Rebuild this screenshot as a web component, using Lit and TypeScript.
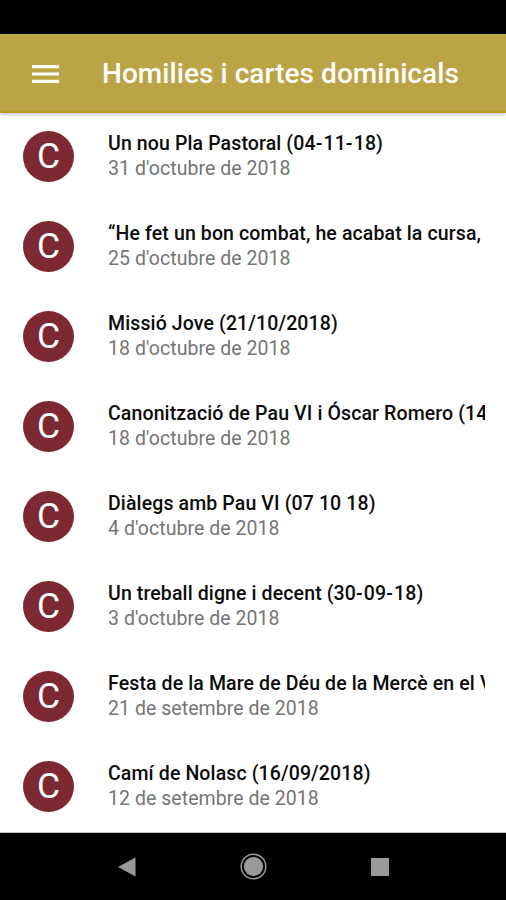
import { LitElement, html, css } from "lit";
import { customElement } from "lit/decorators.js";

const items = [
  ["Un nou Pla Pastoral (04-11-18)", "31 d'octubre de 2018"],
  ["“He fet un bon combat, he acabat la cursa,", "25 d'octubre de 2018"],
  ["Missió Jove (21/10/2018)", "18 d'octubre de 2018"],
  ["Canonització de Pau VI i Óscar Romero (14", "18 d'octubre de 2018"],
  ["Diàlegs amb Pau VI (07 10 18)", "4 d'octubre de 2018"],
  ["Un treball digne i decent (30-09-18)", "3 d'octubre de 2018"],
  ["Festa de la Mare de Déu de la Mercè en el V", "21 de setembre de 2018"],
  ["Camí de Nolasc (16/09/2018)", "12 de setembre de 2018"],
];

@customElement("app-root")
export class AppRoot extends LitElement {
  static styles = css`
    :host { display: flex; flex-direction: column; height: 900px; background: #fff; font-family: Roboto, sans-serif; overflow: hidden; }
    .status { height: 34px; flex: none; background: #000; }
    .bar { height: 79px; flex: none; background: #bba445; display: flex; align-items: center; padding-left: 32px; box-sizing: border-box; border-bottom: 2px solid #b89d2a; box-shadow: 0 1px 4px rgba(60,60,90,.4); color: #fff; }
    .menu { width: 27px; height: 18px; flex: none; margin: 2px 43px 0 0; }
    h1 { margin: 3px 0 0; font-size: 28px; font-weight: 500; line-height: 32px; letter-spacing: .06px; white-space: nowrap; }
    .list { flex: 1; min-height: 0; box-sizing: border-box; border-bottom: 1px solid #c4c4c4; }
    .row { height: 90px; display: flex; padding: 18px 21.5px 0 23px; box-sizing: border-box; }
    .row:last-child { height: 89px; }
    .avatar { width: 51px; height: 51px; flex: none; border-radius: 50%; background: #7d2931; color: #fff; font-size: 35.5px; line-height: 51px; text-align: center; margin-right: 34px; }
    .text { min-width: 0; flex: 1; overflow: hidden; white-space: nowrap; padding-top: 1px; }
    .title { font-size: 19.5px; font-weight: 500; line-height: 24px; letter-spacing: .12px; color: #0c0c0c; }
    .dash { letter-spacing: 1.2px; }
    .date { font-size: 19.5px; line-height: 26px; letter-spacing: .05px; color: #757575; }
    .nav { height: 67px; flex: none; background: #000; display: flex; justify-content: space-between; align-items: center; padding: 0 117px 0 118px; box-sizing: border-box; }
  `;
  render() {
    return html`
      <div class="status"></div>
      <header class="bar">
        <svg class="menu" viewBox="0 0 27 18"><path fill="#fff" d="M0 0h27v3.2H0zM0 7.4h27v3.2H0zM0 14.8h27v3.2H0z"/></svg>
        <h1>Homilies i cartes dominicals</h1>
      </header>
      <main class="list">
        ${items.map(([t, d]) => html`<div class="row"><div class="avatar">C</div><div class="text"><div class="title">${t.split("-").map((part, i) => i ? html`<span class="dash">-</span>${part}` : part)}</div><div class="date">${d}</div></div></div>`)}
      </main>
      <nav class="nav">
        <svg width="18" height="20" viewBox="0 0 18 20"><path fill="#999" d="M0 10L17.5 .5v19z"/></svg>
        <svg width="27" height="27" viewBox="0 0 27 27"><circle cx="13.5" cy="13.5" r="12.3" fill="none" stroke="#999" stroke-width="1.5"/><circle cx="13.5" cy="13.5" r="9.6" fill="#999"/></svg>
        <svg width="18" height="18" viewBox="0 0 18 18"><rect width="18" height="18" fill="#999"/></svg>
      </nav>`;
  }
}
